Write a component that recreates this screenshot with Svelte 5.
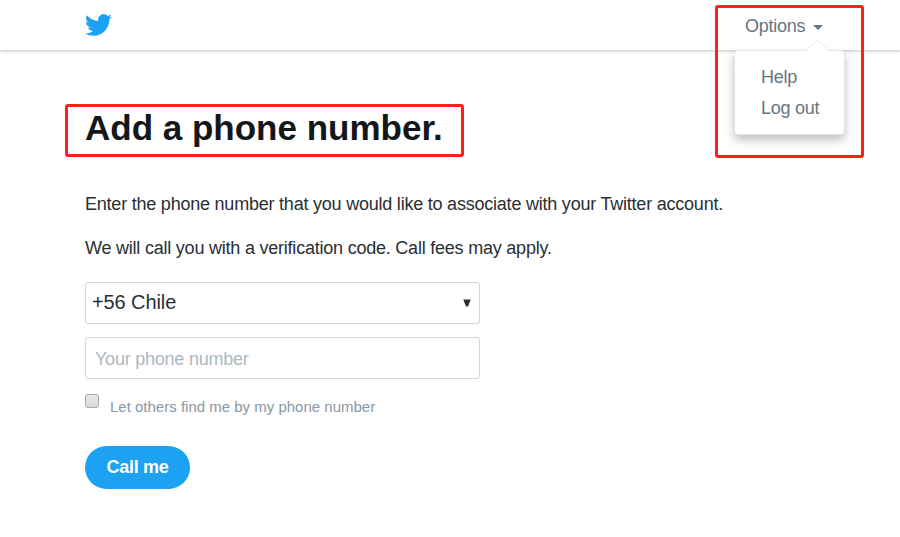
<script>
  const menu = ['Help', 'Log out'];
</script>

<div class="page">
  <header>
    <svg class="bird" viewBox="0 2.1 24 19.8" preserveAspectRatio="none" aria-label="Twitter">
      <path d="M23.953 4.57a10 10 0 01-2.825.775 4.958 4.958 0 002.163-2.723c-.951.555-2.005.959-3.127 1.184a4.92 4.92 0 00-8.384 4.482C7.69 8.095 4.067 6.13 1.64 3.162a4.822 4.822 0 00-.666 2.475c0 1.71.87 3.213 2.188 4.096a4.904 4.904 0 01-2.228-.616v.06a4.923 4.923 0 003.946 4.827 4.996 4.996 0 01-2.212.085 4.936 4.936 0 004.604 3.417 9.867 9.867 0 01-6.102 2.105c-.39 0-.779-.023-1.17-.067a13.995 13.995 0 007.557 2.209c9.053 0 13.998-7.496 13.998-13.985 0-.21 0-.42-.015-.63A9.935 9.935 0 0024 4.59z" />
    </svg>
    <div class="options">
      <span>Options</span>
      <i class="caret"></i>
      <div class="menu">
        <svg class="tip" width="24" height="13" viewBox="0 0 24 13">
          <path d="M0 12L11.5 .8 23 12V13H0Z" fill="#fff" />
          <path d="M.5 11.5L11.5 .8 22.5 11.5" fill="none" stroke="#e1e8ed" />
        </svg>
        {#each menu as item}
          <a href="#top">{item}</a>
        {/each}
      </div>
      <div class="mark options-mark"></div>
    </div>
  </header>

  <main>
    <h1>Add a phone number.<span class="mark title-mark"></span></h1>
    <p class="intro">Enter the phone number that you would like to associate with your Twitter account.</p>
    <p class="fees">We will call you with a verification code. Call fees may apply.</p>
    <div class="field select">
      <span>+56 Chile</span>
      <svg width="8" height="8" viewBox="0 0 8 8"><path d="M.3 .5H7.7L5 7.5H3Z" fill="#292f33" /></svg>
    </div>
    <input class="field" type="text" placeholder="Your phone number" />
    <label><i class="box"></i><span>Let others find me by my phone number</span></label>
    <button>Call me</button>
  </main>
</div>

<style>
  :global(body) { background: #fff; }
  .page {
    width: 900px;
    height: 537px;
    overflow: hidden;
    background: #fff;
    color: #292f33;
    font-family: "Liberation Sans", Arial, sans-serif;
  }
  header {
    box-sizing: border-box;
    height: 50px;
    padding: 0 0 0 85px;
    display: flex;
    justify-content: space-between;
    align-items: flex-start;
    box-shadow: 0 1px 3px rgba(0, 0, 0, 0.25);
  }
  .bird { width: 27px; height: 22px; margin-top: 14px; fill: #1da1f2; }
  .options {
    position: relative;
    width: 155px;
    height: 50px;
    padding-top: 16px;
    box-sizing: border-box;
    display: flex;
    font-size: 18px;
    line-height: 20px;
    color: #66757f;
  }
  .options > span { width: 60px; white-space: nowrap; letter-spacing: -0.25px; }
  .caret {
    margin: 9px 0 0 8px;
    width: 0;
    height: 0;
    border: 5px solid transparent;
    border-top-color: #66757f;
    border-bottom: 0;
  }
  .menu {
    position: absolute;
    left: -11px;
    top: 50px;
    width: 111px;
    height: 85px;
    box-sizing: border-box;
    padding: 11px 0 0 26px;
    border: 1px solid #e1e8ed;
    border-radius: 4px;
    background: #fff;
    box-shadow: 0 5px 10px rgba(0, 0, 0, 0.25);
  }
  .menu a {
    display: block;
    line-height: 31px;
    letter-spacing: -0.25px;
    color: #66757f;
    text-decoration: none;
  }
  .tip { position: absolute; left: 71px; top: -12px; }
  .mark {
    position: absolute;
    box-sizing: border-box;
    border: 3px solid #ff2015;
    border-radius: 3px;
    pointer-events: none;
  }
  .options-mark { left: -30px; top: 5px; width: 149px; height: 153px; }
  .title-mark { left: -20px; top: -4px; width: 399px; height: 53px; }
  main {
    padding: 58px 0 0 85px;
    display: flex;
    flex-direction: column;
    align-items: flex-start;
  }
  h1 {
    position: relative;
    margin: 0;
    height: 40px;
    font-size: 35px;
    line-height: 40px;
    color: #14171a;
    white-space: nowrap;
  }
  p { margin: 0; font-size: 18px; line-height: 24px; white-space: nowrap; letter-spacing: -0.22px; }
  .intro { margin-top: 44px; }
  .fees { margin-top: 20px; }
  .field {
    box-sizing: border-box;
    width: 395px;
    height: 42px;
    border: 1px solid #ccd6dd;
    border-radius: 3px;
    background: #fff;
  }
  .select {
    margin-top: 22px;
    padding: 0 8px 2px 6px;
    display: flex;
    align-items: center;
    justify-content: space-between;
    font-size: 20px;
    letter-spacing: -0.1px;
  }
  .select svg { margin-top: 2px; }
  input.field {
    margin: 13px 0 0;
    padding: 3px 9px 0;
    font: 18px "Liberation Sans", Arial, sans-serif;
    letter-spacing: -0.23px;
    outline: 0;
  }
  input::placeholder { color: #aab8c2; opacity: 1; }
  label { margin-top: 15px; height: 26px; display: flex; font-size: 15px; line-height: 26px; color: #8899a6; }
  .box {
    box-sizing: border-box;
    width: 14px;
    height: 14px;
    margin-right: 11px;
    border: 1px solid #aaa;
    border-radius: 3px;
    background: linear-gradient(#e8e8e8, #d9d9d9);
  }
  button {
    margin: 26px 0 0;
    width: 105px;
    height: 43px;
    padding: 0;
    border: 0;
    border-radius: 22px;
    background: #1da1f2;
    color: #fff;
    font: bold 18px "Liberation Sans", Arial, sans-serif;
    letter-spacing: -0.3px;
  }
</style>
